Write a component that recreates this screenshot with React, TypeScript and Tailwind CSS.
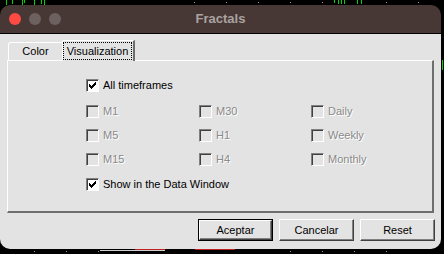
import React from "react";

type BoxProps = { label: string; checked?: boolean; disabled?: boolean };

function CheckBox({ label, checked = false, disabled = false }: BoxProps) {
  return (
    <div className="flex items-center gap-[4px] h-[13px]">
      <span
        className={`w-[13px] h-[13px] shrink-0 flex items-center justify-center border border-t-[#808080] border-l-[#808080] border-b-white border-r-white shadow-[inset_1px_1px_0_#404040] ${
          disabled ? "bg-[#e3e3e3]" : "bg-white"
        }`}
      >
        {checked && (
          <svg width="7" height="7" viewBox="0 0 7 7" shapeRendering="crispEdges">
            <path
              d="M6 0h1v1h-1zM5 1h2v1h-2zM0 2h1v1h-1zM4 2h3v1h-3zM0 3h2v1h-2zM3 3h3v1h-3zM0 4h5v1h-5zM1 5h3v1h-3zM2 6h1v1h-1z"
              fill="#000"
            />
          </svg>
        )}
      </span>
      <span
        className={`text-[11px] leading-[13px] whitespace-nowrap ${
          disabled ? "text-[#8a8a8a] [text-shadow:1px_1px_0_#fff]" : "text-black"
        }`}
      >
        {label}
      </span>
    </div>
  );
}

function Button({ label, primary = false }: { label: string; primary?: boolean }) {
  const inner = (
    <div className="flex-1 flex items-center justify-center bg-[#e3e3e3] border border-t-white border-l-white border-b-[#404040] border-r-[#404040] shadow-[inset_-1px_-1px_0_#808080] text-[11px] text-black">
      {label}
    </div>
  );
  return primary ? (
    <div className="w-[75px] h-[22px] flex border border-black">{inner}</div>
  ) : (
    <div className="w-[75px] h-[22px] flex">{inner}</div>
  );
}

const frames = [
  ["M1", "M30", "Daily"],
  ["M5", "H1", "Weekly"],
  ["M15", "H4", "Monthly"],
];

export default function App() {
  return (
    <div className="relative w-[444px] h-[254px] bg-black overflow-hidden font-['Liberation_Sans',Arial,sans-serif]">
      {/* chart behind the dialog */}
      <svg className="absolute inset-0" width="444" height="254" shapeRendering="crispEdges">
        <g fill="#00d400">
          <rect x="6" y="0" width="1" height="5" />
          <rect x="12" y="0" width="1" height="4" />
          <rect x="22" y="0" width="1" height="5" />
          <rect x="24" y="0" width="1" height="3" />
          <rect x="34" y="0" width="1" height="5" />
          <rect x="41" y="0" width="1" height="4" />
          <rect x="44" y="0" width="1" height="5" />
          <rect x="334" y="0" width="1" height="3" />
          <rect x="338" y="0" width="1" height="4" />
          <rect x="341" y="0" width="1" height="4" />
          <rect x="344" y="0" width="1" height="4" />
          <rect x="357" y="0" width="1" height="4" />
          <rect x="361" y="0" width="1" height="4" />
          <rect x="442" y="60" width="1" height="10" />
        </g>
        <g fill="#9a9a9a">
          <rect x="194" y="2" width="1" height="1" />
          <rect x="226" y="2" width="1" height="1" />
          <rect x="258" y="2" width="1" height="1" />
          <rect x="290" y="2" width="1" height="1" />
          <rect x="322" y="2" width="1" height="1" />
          <rect x="386" y="2" width="1" height="1" />
          <rect x="418" y="2" width="1" height="1" />
          <rect x="34" y="251" width="1" height="1" />
          <rect x="66" y="251" width="1" height="1" />
          <rect x="98" y="251" width="1" height="1" />
          <rect x="290" y="251" width="1" height="1" />
          <rect x="322" y="251" width="1" height="1" />
          <rect x="354" y="251" width="1" height="1" />
          <rect x="386" y="251" width="1" height="1" />
        </g>
        <g fill="#d0d0d0">
          <rect x="100" y="250" width="65" height="1" />
        </g>
        <g fill="#c02020">
          <rect x="135" y="249" width="30" height="1" />
          <rect x="195" y="249" width="40" height="1" />
        </g>
      </svg>

      {/* dialog window */}
      <div className="relative mt-[5px] w-[441px] h-[244px] rounded-[10px] overflow-hidden flex flex-col">
        {/* title bar */}
        <div className="h-[29px] shrink-0 bg-[#473836] border-b border-black flex items-center">
          <div className="w-[61px] flex items-center gap-[8px] pl-[9px]">
            <span className="w-[12px] h-[12px] rounded-full bg-[#fd4a42]" />
            <span className="w-[12px] h-[12px] rounded-full bg-[#6d6160]" />
            <span className="w-[12px] h-[12px] rounded-full bg-[#6d6160]" />
          </div>
          <div className="flex-1 text-center text-[13px] font-bold text-[#aaa3a1]">Fractals</div>
          <div className="w-[61px]" />
        </div>

        {/* body */}
        <div className="flex-1 bg-[#e3e3e3] px-[7px] pt-[6px]">
          {/* tabs */}
          <div className="relative z-10 flex items-end h-[20px] pl-[1px]">
            <div className="w-[54px] h-[18px] border-t border-l border-white rounded-tl-[3px] flex items-center justify-center text-[11px] text-black">
              Color
            </div>
            <div className="w-[73px] h-[21px] -mb-px bg-[#e3e3e3] border-t border-l border-white border-r-2 border-r-[#6e6e6e] rounded-tl-[2px] pt-px pb-[2px] pr-px">
              <span className="h-[18px] flex items-center justify-center border border-dotted border-black text-[11px] text-black">
                Visualization
              </span>
            </div>
          </div>

          {/* panel */}
          <div className="h-[153px] border-t border-l border-white border-r-2 border-b-2 border-r-[#6e6e6e] border-b-[#6e6e6e] pl-[78px] pt-[18px]">
            <CheckBox label="All timeframes" checked />
            <div className="mt-[13px] flex flex-col gap-[11px]">
              {frames.map((row) => (
                <div key={row[0]} className="flex">
                  <div className="w-[113px]">
                    <CheckBox label={row[0]} disabled />
                  </div>
                  <div className="w-[112px]">
                    <CheckBox label={row[1]} disabled />
                  </div>
                  <CheckBox label={row[2]} disabled />
                </div>
              ))}
            </div>
            <div className="mt-[12px]">
              <CheckBox label="Show in the Data Window" checked />
            </div>
          </div>

          {/* buttons */}
          <div className="mt-[6px] -mr-px flex justify-end gap-[6px]">
            <Button label="Aceptar" primary />
            <Button label="Cancelar" />
            <Button label="Reset" />
          </div>
        </div>
      </div>
    </div>
  );
}
